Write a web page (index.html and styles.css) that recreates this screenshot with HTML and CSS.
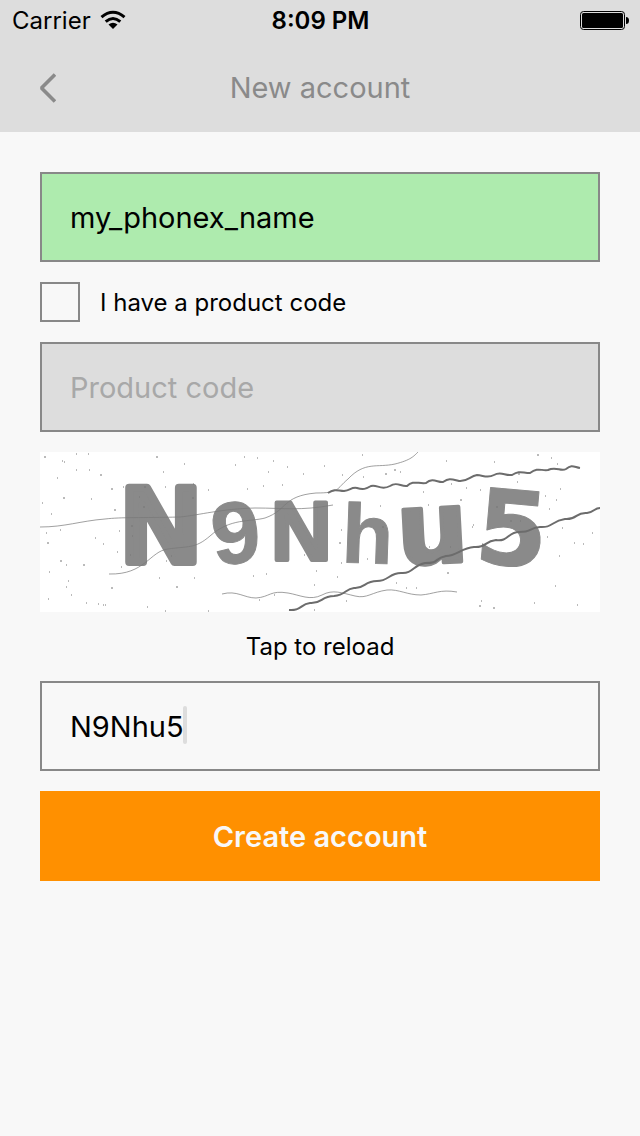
FILE: index.html
```html
<!DOCTYPE html>
<html lang="en">
<head>
<meta charset="utf-8">
<meta name="viewport" content="width=device-width, initial-scale=1">
<title>New account</title>
<link rel="stylesheet" href="styles.css">
</head>
<body>
<header class="top">
  <div class="status">
    <div class="status-left">
      <span>Carrier</span>
      <svg class="wifi" viewBox="0 0 26 20" aria-hidden="true">
        <g fill="none" stroke="#000" stroke-width="3">
          <path d="M1.5 7.2Q13 -2.6 24.500 7.200"/>
          <path d="M5.700 11.700Q13 5.300 20.300 11.700"/>
        </g>
        <path d="M8.500 14.500Q13 11 17.500 14.500L13 19Z"/>
      </svg>
    </div>
    <span class="time">8:09 PM</span>
    <div class="status-right">
      <svg class="battery" viewBox="0 0 49 19" aria-hidden="true">
        <rect x=".5" y=".5" width="44" height="18" rx="3" fill="none" stroke="#000"/>
        <rect x="2" y="2" width="41" height="15" rx="1.500"/>
        <path d="M46 6q3 0 3 3.500t-3 3.500z"/>
      </svg>
    </div>
  </div>
  <nav class="bar">
    <button class="back" type="button" aria-label="Back">
      <svg viewBox="0 0 16 30" aria-hidden="true"><path d="M15 1.500L2 14.500V15.500L15 28.500" fill="none" stroke="#8a8a8a" stroke-width="3.600"/></svg>
    </button>
    <h1 class="title">New account</h1>
  </nav>
</header>
<main>
  <form class="form">
    <input class="field valid" type="text" value="my_phonex_name" aria-label="User name">
    <label class="check"><input type="checkbox">I have a product code</label>
    <input class="field" type="text" placeholder="Product code" aria-label="Product code" disabled>
    <button class="captcha" type="button">
      <svg viewBox="0 0 560 160" role="img" aria-label="Verification code">
        <rect width="560" height="160" fill="#fff"/>
        <g class="letters">
          <text class="narrow" font-size="108" stroke-width="8" x="82" y="110">N</text>
          <text class="narrow" font-size="88" stroke-width="1" x="171" y="111" transform="rotate(-6 196 80)">9</text>
          <text class="narrow" font-size="84" stroke-width="4" x="231" y="108">N</text>
          <text class="narrow" font-size="84" stroke-width="1" x="302" y="111" transform="rotate(2 326 80)">h</text>
          <text class="wide" font-size="100" stroke-width="4" x="357" y="111" transform="rotate(-3 392 85)">u</text>
          <text class="wide" font-size="104" stroke-width="1" x="436" y="113" transform="rotate(5 470 76)">5</text>
        </g>
        <g class="thin">
          <path d="M0 75C25 75 40 69 65 67C82 65 100 66 140 65C160 63 180 57 215 56C245 56 260 59 293 53"/>
          <path d="M69 122C105 123 110 99 128 97C148 94 155 97 170 84C190 66 210 70 225 66C248 58 242 44 276 41C300 41 296 37 308 27C325 9 337 16 355 12C371 8 374 4 378 0"/>
          <path d="M182 142C197 138 204 146 216 146C230 145 230 138 248 141C260 143 270 149 282 143C293 137 302 141 315 144C327 147 332 140 347 138C359 137 367 143 381 143C394 142 400 137 417 140"/>
        </g>
        <g class="thick">
          <path d="M288 41C295 36 298 39 304 39C311 38 311 35 317 36C323 38 326 37 331 34C337 32 341 39 350 34C357 29 361 35 367 34C373 28 378 32 386 31C393 25 398 31 403 30C409 26 411 27 419 29C427 30 430 24 437 23C443 23 447 27 454 23C461 19 465 24 472 23C480 18 482 21 490 21C498 15 501 19 508 18C516 14 521 20 526 17C532 12 534 15 540 16"/>
          <path d="M249 158C262 159 260 152 270 151C282 152 281 144 294 144C306 143 305 137 314 136C325 137 324 129 337 129C349 129 349 121 361 121C373 122 373 113 385 111C400 111 393 107 406 104C417 104 421 96 434 95C447 96 444 89 456 88C468 90 468 80 479 80C493 80 488 76 500 75C513 76 511 69 525 67C538 68 535 60 547 61C555 60 554 56 560 56"/>
        </g>
        <path class="specks" d="M4 5h2M24 10h1M36 2h1M48 2h1M36 18h1M22 9h1M49 18h1M17 26h1M60 23h2M2 51h1M23 46h2M51 47h1M11 62h1M20 78h1M6 81h1M7 91h2M55 86h1M63 92h1M20 109h2M26 113h1M43 113h2M9 120h1M28 129h1M26 135h1M8 147h1M31 143h1M46 151h1M58 152h1M63 153h1M65 153h1M71 136h2M81 115h1M90 103h1M77 100h1M74 58h2M91 74h2M79 79h1M92 84h1M71 37h2M83 35h1M104 35h2M103 55h2M99 45h1M116 5h2M123 20h1M125 35h1M153 32h1M144 12h1M168 38h1M152 46h2M131 104h1M126 109h1M119 126h1M136 135h2M154 126h1M107 155h1M125 159h1M168 159h1M195 13h1M204 5h1M217 6h1M233 9h1M247 15h1M263 22h1M228 20h1M207 37h1M223 34h1M242 33h1M284 14h1M302 23h1M345 22h2M322 3h1M323 25h1M354 18h2M360 20h1M340 54h1M301 78h1M299 91h2M264 103h1M301 111h1M276 119h1M297 125h1M274 133h1M226 122h1M213 124h1M234 143h1M219 148h1M274 158h1M306 149h1M327 107h1M342 75h2M356 131h1M366 136h1M388 53h1M383 40h1M411 32h1M406 9h1M454 10h1M478 22h2M477 30h1M497 3h2M511 6h1M517 12h1M520 37h1M505 44h1M509 57h1M516 48h1M426 36h1M420 48h2M433 73h1M432 75h1M410 95h1M407 121h2M456 55h2M470 69h2M480 69h1M507 85h1M522 76h1M534 91h1M552 81h1M543 92h1M519 104h1M515 134h1M494 151h1M537 153h1M441 149h1M439 154h2M453 156h2M376 136h1M389 95h1M440 38h1"/>
      </svg>
      <span class="reload">Tap to reload</span>
    </button>
    <div class="entry">
      <input class="field" type="text" value="N9Nhu5" aria-label="Verification code">
      <span class="caret"></span>
    </div>
    <button class="submit" type="submit">Create account</button>
  </form>
</main>
</body>
</html>
```
FILE: styles.css
```css
* {
  box-sizing: border-box;
}

body {
  margin: 0;
  min-height: 100vh;
  background: #f8f8f8;
  color: #000;
  font-family: Inter, "Liberation Sans", sans-serif;
}

button,
input {
  font: inherit;
}

svg {
  display: block;
}

.top {
  background: #ddd;
}

.status {
  display: grid;
  grid-template-columns: 1fr auto 1fr;
  align-items: center;
  height: 40px;
  padding: 0 11px 0 12px;
  font-size: 24px;
}

.status-left {
  display: flex;
  align-items: center;
  gap: 9px;
}

.wifi {
  width: 26px;
  height: 20px;
}

.time {
  font-weight: 600;
}

.status-right {
  display: flex;
  justify-content: flex-end;
}

.battery {
  width: 49px;
  height: 19px;
}

.bar {
  display: grid;
  grid-template-columns: 60px 1fr 60px;
  align-items: center;
  height: 92px;
  padding-top: 3px;
  color: #8a8a8a;
}

.back {
  display: flex;
  justify-content: flex-end;
  padding: 8px 4px 8px 0;
  border: 0;
  background: none;
}

.back svg {
  width: 16px;
  height: 30px;
}

.title {
  margin: 0;
  text-align: center;
  font-size: 29px;
  font-weight: 400;
}

.form {
  display: flex;
  flex-direction: column;
  gap: 20px;
  padding: 40px;
}

.field {
  display: block;
  width: 100%;
  height: 90px;
  padding: 0 28px;
  border: 2px solid #888;
  border-radius: 0;
  outline: 0;
  background: transparent;
  color: #000;
  font-size: 29px;
}

.field.valid {
  background: #aeebae;
}

.field:disabled {
  background: #ddd;
}

.field::placeholder {
  color: #a8a8a8;
  opacity: 1;
}

.check {
  display: flex;
  align-items: center;
  gap: 20px;
  font-size: 24px;
}

.check input {
  appearance: none;
  width: 40px;
  height: 40px;
  margin: 0;
  border: 2px solid #888;
}

.captcha {
  display: block;
  width: 100%;
  padding: 0;
  border: 0;
  background: none;
  color: #000;
}

.captcha svg {
  width: 100%;
}

.reload {
  display: block;
  padding-top: 20px;
  font-size: 24px;
  line-height: 29px;
}

.letters {
  fill: #8a8a8a;
  stroke: #8a8a8a;
  stroke-linejoin: round;
  font-weight: 700;
}

.wide {
  font-family: "DejaVu Sans", sans-serif;
}

.narrow {
  font-family: "Liberation Sans", sans-serif;
}

.thin {
  fill: none;
  stroke: #777;
  stroke-opacity: .7;
}

.thick {
  fill: none;
  stroke: #6c6c6c;
  stroke-width: 2;
}

.specks {
  fill: none;
  stroke: #777;
}

.entry {
  position: relative;
}

.caret {
  position: absolute;
  top: 25px;
  left: 143px;
  width: 4px;
  height: 38px;
  border-radius: 2px;
  background: #ddd;
}

.submit {
  height: 90px;
  border: 0;
  background: #ff9000;
  color: #f8f8f8;
  font-size: 29px;
  font-weight: 600;
}
```
